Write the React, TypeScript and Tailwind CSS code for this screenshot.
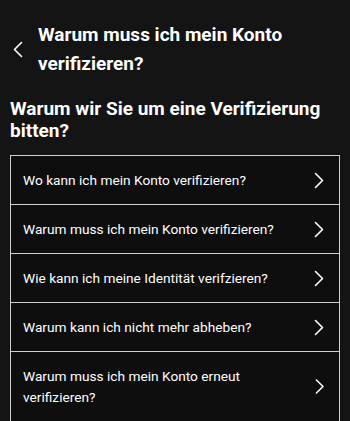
import React from "react";

const items = [
  "Wo kann ich mein Konto verifizieren?",
  "Warum muss ich mein Konto verifizieren?",
  "Wie kann ich meine Identität verifzieren?",
  "Warum kann ich nicht mehr abheben?",
  "Warum muss ich mein Konto erneut verifizieren?",
];

function Chevron({ dir }: { dir: "left" | "right" }) {
  return (
    <svg width="10" height="17" viewBox="0 0 10 17" fill="none" stroke="white" strokeWidth="1.6" strokeLinecap="round" strokeLinejoin="round">
      {dir === "right" ? <path d="M1.5 1.5 L8.5 8.5 L1.5 15.5" /> : <path d="M8.5 1.5 L1.5 8.5 L8.5 15.5" />}
    </svg>
  );
}

export default function App() {
  return (
    <div className="w-[350px] h-[421px] overflow-hidden bg-[#141414] text-white" style={{ fontFamily: "Roboto, 'Liberation Sans', sans-serif" }}>
      <div className="flex items-center pl-[13px] pt-[20px]">
        <div className="w-[25px] flex items-center">
          <Chevron dir="left" />
        </div>
        <h1 className="text-[19px] font-bold leading-[29px] w-[270px]">Warum muss ich mein Konto verifizieren?</h1>
      </div>
      <h2 className="px-[10px] mt-[20px] text-[19px] font-bold leading-[22px]">Warum wir Sie um eine Verifizierung bitten?</h2>
      <div className="mx-[10px] mt-[13px] border border-[#cfcfcf] bg-[#0e0e0e]">
        {items.map((t, i) => (
          <div key={i} className={`flex items-center justify-between pl-[12px] pr-[15px] py-[13.5px] ${i > 0 ? "border-t border-[#cfcfcf]" : ""}`}>
            <span className="text-[13.7px] leading-[21px] pr-4">{t}</span>
            <Chevron dir="right" />
          </div>
        ))}
        <div className="h-[48px] border-t border-[#cfcfcf]" />
      </div>
    </div>
  );
}
